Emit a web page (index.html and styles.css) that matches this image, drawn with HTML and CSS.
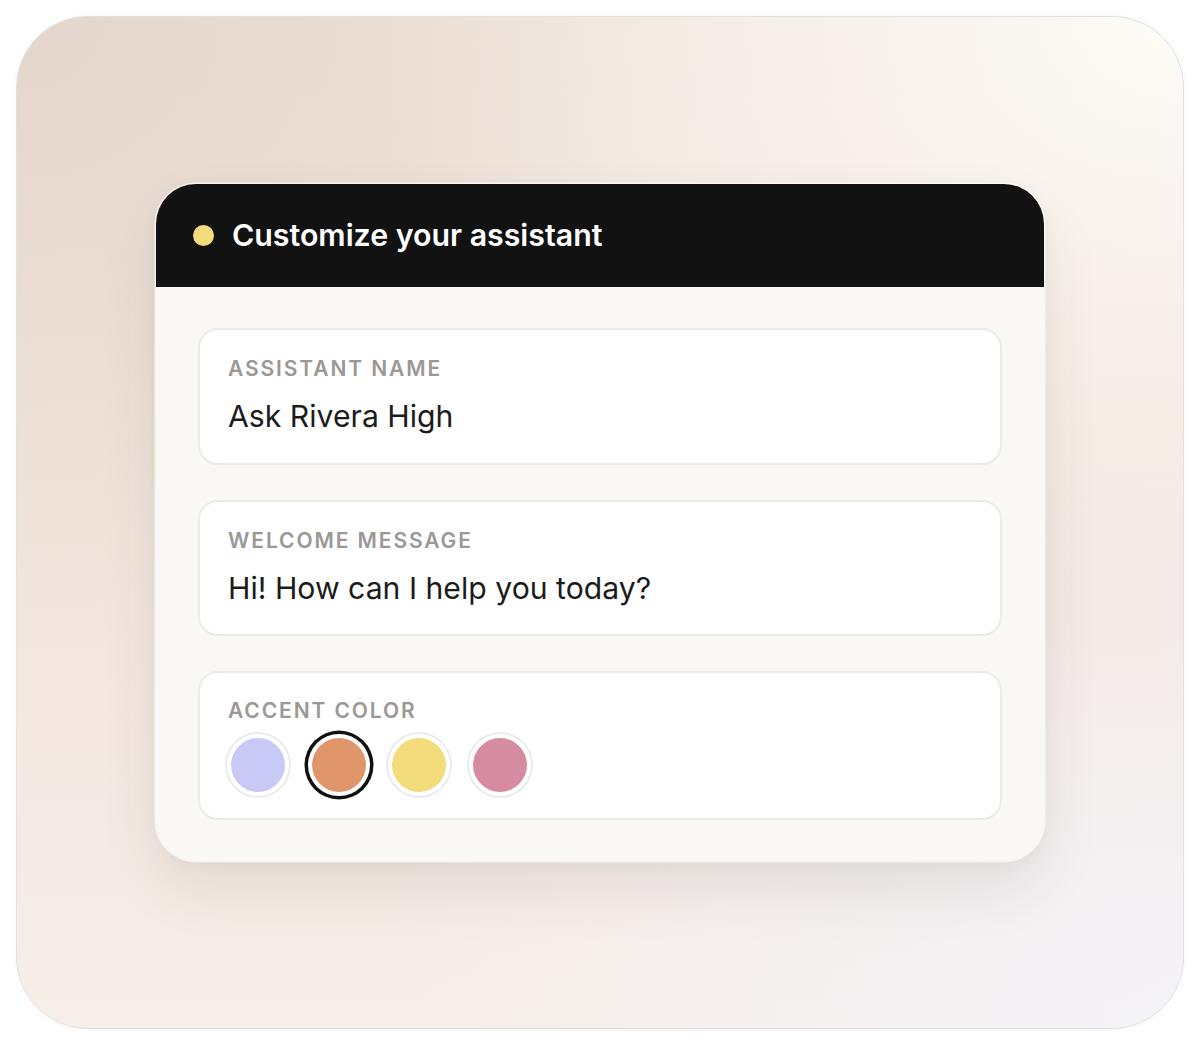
FILE: index.html
```html
<!DOCTYPE html>
<html lang="en">
<head>
<meta charset="utf-8">
<title>Customize your assistant</title>
<link rel="stylesheet" href="styles.css">
</head>
<body>
<div class="frame">
  <section class="card">
    <header class="card-head">
      <span class="dot"></span>
      <h1 class="title">Customize your assistant</h1>
    </header>
    <div class="card-body">
      <div class="field">
        <div class="label">Assistant name</div>
        <div class="value">Ask Rivera High</div>
      </div>
      <div class="field">
        <div class="label">Welcome message</div>
        <div class="value">Hi! How can I help you today?</div>
      </div>
      <div class="field field-colors">
        <div class="label">Accent color</div>
        <div class="swatches">
          <span class="swatch lavender"></span>
          <span class="swatch orange selected"></span>
          <span class="swatch yellow"></span>
          <span class="swatch rose"></span>
        </div>
      </div>
    </div>
  </section>
</div>
</body>
</html>
```

FILE: styles.css
```css
* { box-sizing: border-box; }

html, body {
  margin: 0;
  background: #ffffff;
}

body {
  padding: 16px;
  font-family: Inter, "Noto Sans", "Liberation Sans", sans-serif;
}

.frame {
  width: 1168px;
  height: 1013px;
  border-radius: 72px;
  border: 1.5px solid #e3e1df;
  box-shadow: 0 0 6px rgba(0, 0, 0, 0.04);
  background:
    radial-gradient(ellipse 70% 60% at 100% 0%, rgba(253, 252, 246, 1) 0%, rgba(253, 252, 246, 0) 100%),
    radial-gradient(ellipse 70% 60% at 100% 100%, rgba(244, 243, 248, 1) 0%, rgba(244, 243, 248, 0) 100%),
    radial-gradient(ellipse 60% 60% at 0% 0%, rgba(228, 214, 204, 1) 0%, rgba(228, 214, 204, 0) 100%),
    linear-gradient(180deg, #efe2d9 0%, #f3e6de 60%, #f6eee8 100%);
  display: flex;
  align-items: center;
  justify-content: center;
}

.card {
  width: 888px;
  border-radius: 40px;
  background: #f9f8f4;
  overflow: hidden;
  box-shadow:
    0 0 0 1.5px rgba(255, 255, 255, 0.7),
    0 28px 60px rgba(60, 50, 40, 0.09),
    0 4px 14px rgba(60, 50, 40, 0.05);
}

.card-head {
  height: 103px;
  background: #121212;
  display: flex;
  align-items: center;
  gap: 18px;
  padding: 0 0 0 37px;
}

.dot {
  width: 21px;
  height: 21px;
  border-radius: 50%;
  background: #f2dc7b;
  flex: none;
}

.title {
  margin: 0;
  color: #ffffff;
  font-size: 30.3px;
  font-weight: 600;
  letter-spacing: 0;
  line-height: 1;
}

.card-body {
  padding: 41px 42px;
  display: flex;
  flex-direction: column;
  gap: 35px;
}

.field {
  background: #ffffff;
  border: 2px solid #ecebe9;
  border-radius: 20px;
  padding: 26px 28px 28px;
  height: 137px;
}

.field + .field {
  height: 136px;
}

.field.field-colors {
  height: 149px;
  padding-top: 25px;
}

.label {
  font-size: 21px;
  font-weight: 600;
  letter-spacing: 0.09em;
  text-transform: uppercase;
  color: #9b9895;
  line-height: 26px;
}

.value {
  margin-top: 16px;
  font-size: 30.2px;
  font-weight: 400;
  letter-spacing: 0;
  color: #1c1c1c;
  line-height: 36px;
}

.swatches {
  display: flex;
  gap: 26.7px;
  margin-top: 14px;
  padding-left: 3px;
}

.swatch {
  width: 54px;
  height: 54px;
  border-radius: 50%;
  flex: none;
  box-shadow: 0 0 0 4px #ffffff, 0 0 0 6px #ecebea;
}

.swatch.selected {
  box-shadow: 0 0 0 4px #ffffff, 0 0 0 7.5px #111111;
}

.lavender { background: #c8c9f4; }
.orange { background: #e0966b; }
.yellow { background: #f2dc7b; }
.rose { background: #d68ba0; }
```
